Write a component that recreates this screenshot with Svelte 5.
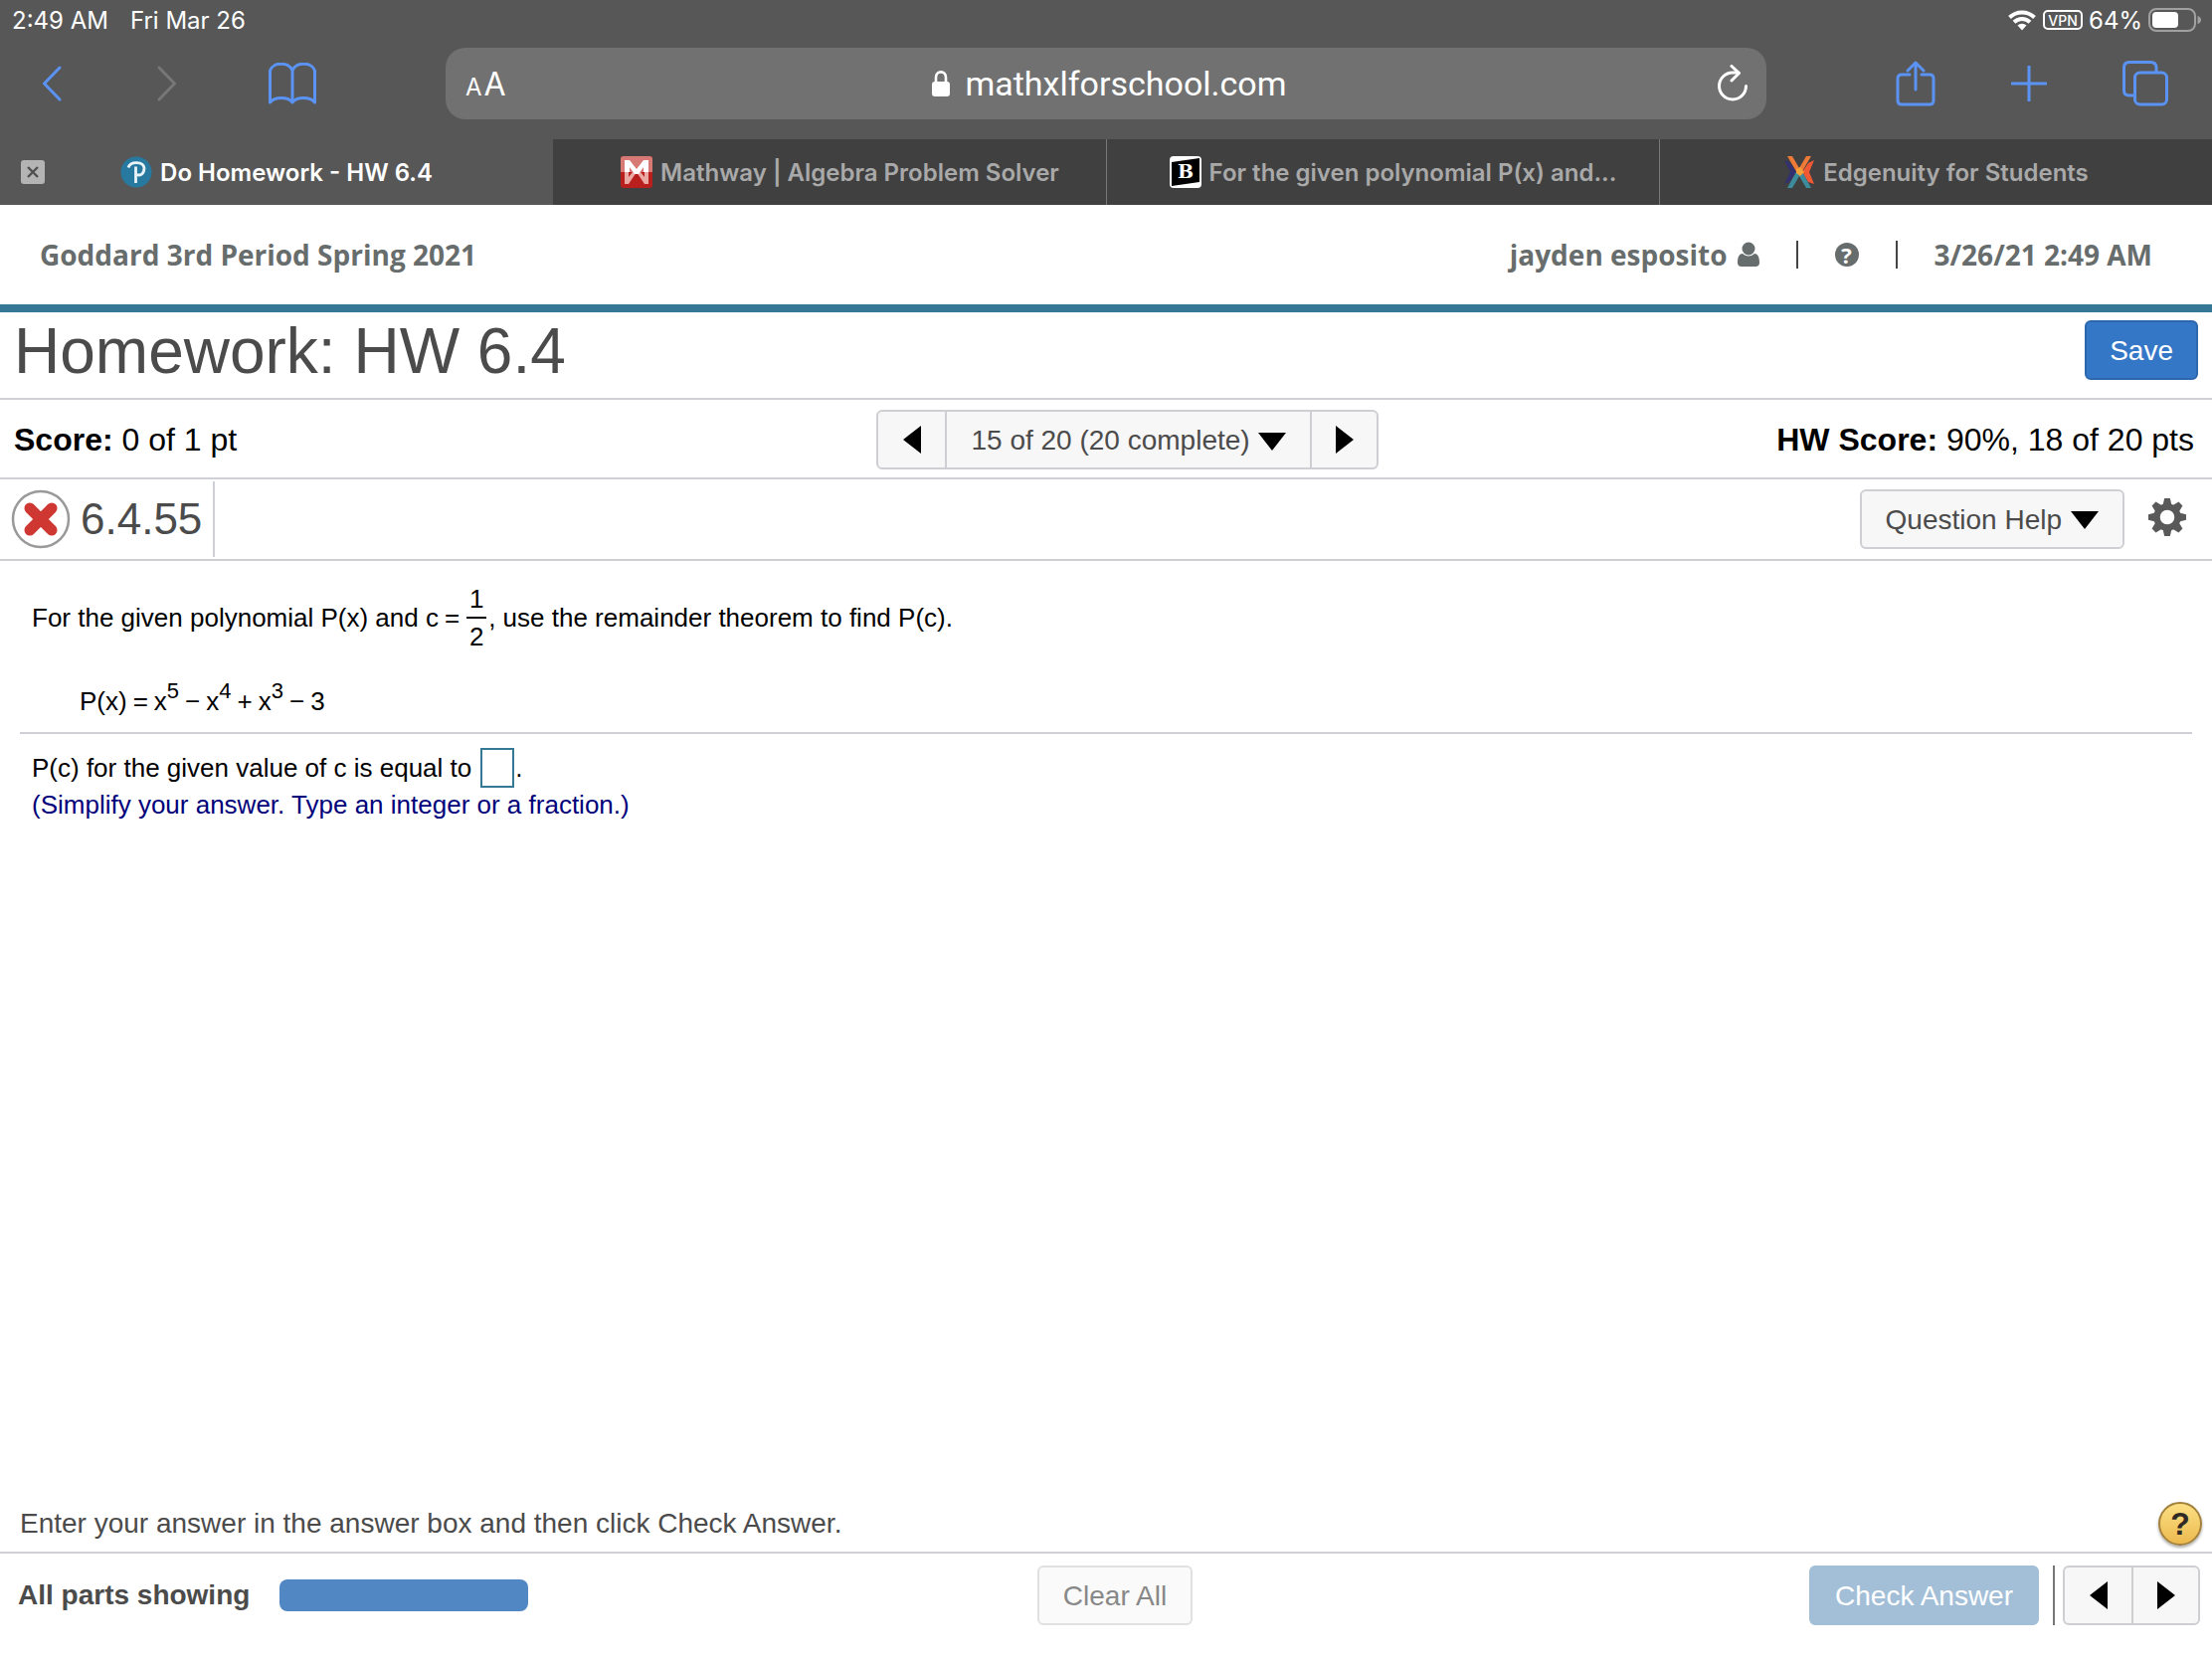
<script>
  let question = $state('15');
  let answer = $state('');
  const teeth = [0, 45, 90, 135, 180, 225, 270, 315];
  const terms = [
    { op: '=', power: '5' },
    { op: '−', power: '4' },
    { op: '+', power: '3' }
  ];
</script>

<div class="screen">
  <header class="browser">
    <div class="status">
      <span>2:49 AM</span>
      <span class="date">Fri Mar 26</span>
      <div class="indicators">
        <svg width="30" height="22" viewBox="0 0 30 22" aria-label="Wi-Fi">
          <g fill="none" stroke="#fff" stroke-width="4">
            <path d="M2.5 8.5 A18 18 0 0 1 27.500 8.5" />
            <path d="M7 13.300 A11.500 11.500 0 0 1 23 13.300" />
          </g>
          <path d="M10.500 16.500 A6.500 6.500 0 0 1 19.500 16.500 L15 21.500 Z" fill="#fff" />
        </svg>
        <span class="vpn">VPN</span>
        <span class="percent">64%</span>
        <svg width="54" height="26" viewBox="0 0 54 26" aria-label="Battery">
          <rect x="1" y="2" width="46" height="22" rx="7" fill="none" stroke="#a0a0a0" stroke-width="2" />
          <rect x="4" y="5" width="26" height="16" rx="4" fill="#fff" />
          <path d="M49.500 9 Q53 10 53 13 Q53 16 49.500 17 Z" fill="#a0a0a0" />
        </svg>
      </div>
    </div>

    <div class="toolbar">
      <div class="tools left">
        <button aria-label="Back">
          <svg width="20" height="36" viewBox="0 0 20 36"><path d="M18 2 L2.500 18 L18 34" /></svg>
        </button>
        <button class="dim" aria-label="Forward">
          <svg width="20" height="36" viewBox="0 0 20 36"><path d="M2 2 L17.500 18 L2 34" /></svg>
        </button>
        <button aria-label="Bookmarks">
          <svg width="48" height="42" viewBox="0 0 48 42">
            <path d="M24 40 C20 34 6 34 1.500 40 V8 C4 -1 21 -1 24 8 C27 -1 44 -1 46.500 8 V40 C42 34 28 34 24 40 V8" />
          </svg>
        </button>
      </div>
      <div class="address">
        <button class="reader" aria-label="Text size"><small>A</small><span>A</span></button>
        <button class="location">
          <svg width="20" height="28" viewBox="0 0 20 28">
            <rect x="1" y="12" width="18" height="15" rx="3" fill="#fff" />
            <path d="M5 13 V8 C5 0.500 15 0.500 15 8 V13" fill="none" stroke="#fff" stroke-width="2.600" />
          </svg>
          mathxlforschool.com
        </button>
        <button class="reload" aria-label="Reload">
          <svg width="32" height="38" viewBox="0 0 32 38">
            <path d="M29.500 21.500 A13.500 13.500 0 1 1 16 8 L22 8" />
            <path d="M15 1.500 L22.500 8.500 L15 16" />
          </svg>
        </button>
      </div>
      <div class="tools right">
        <button aria-label="Share">
          <svg width="40" height="46" viewBox="0 0 40 46">
            <path d="M14 14 H6 Q2 14 2 18 V40 Q2 44 6 44 H34 Q38 44 38 40 V18 Q38 14 34 14 H26" />
            <path d="M20 29 V2.500 M12 10 L20 2 L28 10" />
          </svg>
        </button>
        <button aria-label="New tab">
          <svg width="36" height="36" viewBox="0 0 36 36"><path d="M18 1 V35 M1 18 H35" /></svg>
        </button>
        <button aria-label="All tabs">
          <svg width="46" height="46" viewBox="0 0 46 46">
            <rect x="12.500" y="12" width="32" height="32" rx="5" />
            <path d="M12 35 H7 Q1.500 35 1.500 30 V7 Q1.500 1.500 7 1.500 H28 Q34 1.500 34 7 V11" />
          </svg>
        </button>
      </div>
    </div>

    <nav class="tabs">
      <div class="tab active">
        <button class="close" aria-label="Close tab">
          <svg width="14" height="14" viewBox="0 0 14 14"><path d="M2 2 L12 12 M12 2 L2 12" stroke="#505050" stroke-width="2.400" /></svg>
        </button>
        <a href="#homework">
          <svg width="32" height="32" viewBox="0 0 32 32">
            <circle cx="16" cy="16" r="15.500" fill="#28799f" />
            <path d="M8 11.500 C10 5 23 5 24 12 C24 18 20 20 15.500 18.500" fill="none" stroke="#e8f4f8" stroke-width="2.800" />
            <path d="M15.500 10.500 V27" stroke="#e8f4f8" stroke-width="2.800" />
          </svg>
          Do Homework - HW 6.4
        </a>
      </div>
      <div class="tab inset">
        <a href="#mathway">
          <svg width="32" height="32" viewBox="0 0 32 32">
            <rect width="32" height="32" rx="3" fill="#b9201d" />
            <path d="M0 16 V3 Q0 0 3 0 H29 Q32 0 32 3 V16 Z" fill="#d87975" />
            <path d="M4 16 V28 H8 L16 16 L24 28 H28 V16 H24 V21 L20 16 H12 L8 21 V16 Z" fill="#eba9a6" />
            <path d="M4 16 V4 H9 L16 13 L23 4 H28 V16 H23 V11 L18 18 H14 L9 11 V16 Z" fill="#fff" />
          </svg>
          Mathway | Algebra Problem Solver
        </a>
      </div>
      <div class="tab inset">
        <a href="#brainly">
          <svg width="32" height="32" viewBox="0 0 32 32">
            <rect width="32" height="32" rx="4" fill="#fff" />
            <path d="M2 6 L30 2 V26 L2 30 Z" fill="#000" />
            <text x="16" y="22" text-anchor="middle" class="mark">B</text>
          </svg>
          For the given polynomial P(x) and...
        </a>
      </div>
      <div class="tab">
        <a href="#edgenuity">
          <svg width="32" height="32" viewBox="0 0 32 32">
            <path d="M1 4 L6 6 L13 16 L6 26 L1 28 L7 16 Z" fill="#33306f" />
            <path d="M31 4 L25 7 L19 16 L25 26 L31 28 L26 16 Z" fill="#ef5a35" />
            <path d="M4 0 L9 0 L16 12 L23 0 L28 0 L18 17 L14 17 Z" fill="#ee7a38" />
            <path d="M14 14 H18 L28 32 H23 L16 20 L9 32 H4 Z" fill="#3d8c9d" />
            <path d="M13 13 L17 11 L21 16 L17 20 L13 17 Z" fill="#f3a23a" />
          </svg>
          Edgenuity for Students
        </a>
      </div>
    </nav>
  </header>

  <div class="course">
    <span>Goddard 3rd Period Spring 2021</span>
    <div class="account">
      <a class="user" href="#account">
        jayden esposito
        <svg width="22" height="26" viewBox="0 0 22 26">
          <circle cx="11" cy="7" r="6.500" fill="#676c6c" />
          <path d="M0 21 C0 15 2 12 5 12 Q11 17 17 12 C20 12 22 15 22 21 Q22 25 18 25 H4 Q0 25 0 21 Z" fill="#676c6c" />
        </svg>
      </a>
      <i></i>
      <a class="help" href="#help" aria-label="Help">?</a>
      <i></i>
      <time>3/26/21 2:49 AM</time>
    </div>
  </div>

  <div class="title">
    <h1>Homework: HW 6.4</h1>
    <button class="btn save">Save</button>
  </div>

  <div class="scores">
    <span><b>Score:</b> 0 of 1 pt</span>
    <div class="group">
      <button aria-label="Previous question">
        <svg width="18" height="28" viewBox="0 0 18 28"><path d="M18 0 V28 L0 14 Z" /></svg>
      </button>
      <div class="picker">
        <select bind:value={question} aria-label="Question">
          <option value="15">15 of 20 (20 complete)</option>
        </select>
        <svg width="28" height="18" viewBox="0 0 28 18"><path d="M0 0 H28 L14 18 Z" /></svg>
      </div>
      <button aria-label="Next question">
        <svg width="18" height="28" viewBox="0 0 18 28"><path d="M0 0 V28 L18 14 Z" /></svg>
      </button>
    </div>
    <span class="end"><b>HW Score:</b> 90%, 18 of 20 pts</span>
  </div>

  <div class="exercise">
    <div class="number">
      <svg width="60" height="60" viewBox="0 0 60 60" aria-label="Incorrect">
        <circle cx="30" cy="30" r="28" fill="#fff" stroke="#999" stroke-width="2.500" />
        <path d="M19 19 L41 41 M41 19 L19 41" stroke="#cf3732" stroke-width="11" stroke-linecap="round" />
      </svg>
      6.4.55
    </div>
    <button class="btn">
      Question Help
      <svg width="28" height="18" viewBox="0 0 28 18"><path d="M0 0 H28 L14 18 Z" /></svg>
    </button>
    <button class="gear" aria-label="Settings">
      <svg width="38" height="38" viewBox="-19 -19 38 38">
        <circle r="10.500" fill="none" stroke="#595959" stroke-width="6.500" />
        {#each teeth as angle}
          <path d="M-4.500 -12 L-2.800 -19 H2.800 L4.500 -12 Z" fill="#595959" transform="rotate({angle})" />
        {/each}
      </svg>
    </button>
  </div>

  <main>
    <div class="problem">
      <p class="sentence">
        <span>For the given polynomial P(x) and c</span>
        <span class="equals">=</span>
        <span class="fraction"><span>1</span><span>2</span></span>
        <span>, use the remainder theorem to find P(c).</span>
      </p>
      <p class="formula">
        P(x){#each terms as term}<span class="op">{term.op}</span>x<sup>{term.power}</sup>{/each}<span class="op">−</span>3
      </p>
    </div>
    <div class="response">
      <label class="sentence">
        <span>P(c) for the given value of c is equal to</span>
        <input bind:value={answer} type="text" />
        <span>.</span>
      </label>
      <p class="note">(Simplify your answer. Type an integer or a fraction.)</p>
    </div>
  </main>

  <div class="hint">
    <span>Enter your answer in the answer box and then click Check Answer.</span>
    <button class="assist" aria-label="Get help">?</button>
  </div>

  <footer>
    <div class="parts"><b>All parts showing</b><div class="bar"></div></div>
    <button class="btn clear">Clear All</button>
    <div class="actions">
      <button class="btn check">Check Answer</button>
      <i></i>
      <div class="group">
        <button aria-label="Previous">
          <svg width="18" height="28" viewBox="0 0 18 28"><path d="M18 0 V28 L0 14 Z" /></svg>
        </button>
        <button aria-label="Next">
          <svg width="18" height="28" viewBox="0 0 18 28"><path d="M0 0 V28 L18 14 Z" /></svg>
        </button>
      </div>
    </div>
  </footer>
</div>

<style>
  * { box-sizing: border-box; }
  button, select, input { font: inherit; color: inherit; margin: 0; padding: 0; border: 0; background: none; border-radius: 0; }
  a { color: inherit; text-decoration: none; }
  p, h1 { margin: 0; font-weight: 400; }
  svg { display: block; flex: none; }
  .screen {
    display: flex; flex-direction: column; min-height: 100vh; background: #fff; color: #4b4b4b;
    font-family: "Liberation Sans", Arial, sans-serif; font-size: 28px;
  }

  .browser { background: #575757; color: #fff; font-family: Inter, sans-serif; font-size: 24px; }
  .status { display: flex; align-items: center; height: 40px; padding: 0 10px 0 12px; }
  .date { margin-left: 22px; }
  .indicators { display: flex; align-items: center; gap: 6px; margin-left: auto; }
  .vpn {
    display: flex; align-items: center; justify-content: center; width: 40px; height: 20px;
    border: 2px solid #fff; border-radius: 5px; font-size: 14px; font-weight: 500;
  }
  .toolbar { display: grid; grid-template-columns: 28fr 83fr 28fr; align-items: center; height: 100px; padding-bottom: 12px; }
  .tools { display: flex; align-items: center; }
  .tools svg { fill: none; stroke: #5b93f4; stroke-width: 3; stroke-linecap: round; stroke-linejoin: round; }
  .tools .dim { padding-left: 4px; }
  .tools .dim svg { stroke: #777; }
  .left { padding-left: 42px; gap: 92px; }
  .right { padding-right: 44px; gap: 76px; justify-content: flex-end; }
  .address {
    display: grid; grid-template-columns: 1fr auto 1fr; align-items: center; height: 72px;
    padding: 0 18px 0 20px; border-radius: 20px; background: #717171;
  }
  .reader { display: flex; align-items: baseline; font-size: 32px; gap: 2px; }
  .reader small { font-size: 24px; }
  .location { display: flex; align-items: center; gap: 14px; padding-left: 4px; font: 34px Roboto, sans-serif; }
  .reload { justify-self: end; }
  .reload svg { fill: none; stroke: #fff; stroke-width: 3; stroke-linecap: round; stroke-linejoin: round; }
  .tabs { display: grid; grid-template-columns: repeat(4, 1fr); height: 66px; font-weight: 600; }
  .tab {
    position: relative; display: flex; align-items: center; justify-content: center;
    background: #404040; color: #a9a9a9; border-left: 1px solid #777;
  }
  .tab a { display: flex; align-items: center; gap: 8px; white-space: nowrap; }
  .tab.active { background: none; color: #fff; border: 0; }
  .tab.active + .tab { border-color: #404040; }
  .tab.inset { padding-left: 20px; }
  .close {
    position: absolute; left: 21px; display: grid; place-items: center; width: 24px; height: 24px;
    border-radius: 3px; background: #b4b4b4;
  }
  .mark { font: bold 19px "DejaVu Serif", serif; fill: #fff; }

  .course {
    display: flex; justify-content: space-between; align-items: center; height: 108px; padding: 0 60px 0 40px;
    border-bottom: 8px solid #357896; color: #676c6c; font: 700 28px "Open Sans", sans-serif;
  }
  .account { display: flex; align-items: center; gap: 37px; }
  .user { display: flex; align-items: center; gap: 10px; }
  .account i { width: 2px; height: 28px; background: #444; }
  .help {
    display: grid; place-items: center; width: 24px; height: 24px; border-radius: 50%;
    background: #676c6c; color: #fff; font-size: 22px; line-height: 24px;
  }

  .title { display: flex; justify-content: space-between; align-items: center; height: 88px; padding: 0 14px; border-bottom: 2px solid #cfcfd6; }
  h1 { font-size: 64px; line-height: 76px; padding-bottom: 8px; }
  .btn {
    display: flex; align-items: center; justify-content: center; gap: 9px; height: 60px; padding: 2px 24px 0;
    border: 2px solid #cfcfd3; border-radius: 6px; background: #f7f7f7; white-space: nowrap;
  }
  .title .save { margin-bottom: 10px; padding: 2px 23px 0; border-color: #2d68ae; background: #3577c7; color: #fff; }

  .scores {
    display: grid; grid-template-columns: 217fr auto 205fr; align-items: center; height: 80px; padding: 2px 18px 0 14px;
    border-bottom: 2px solid #cfcfd6; color: #000; font-size: 32px;
  }
  .end { text-align: right; }
  .group { display: flex; height: 60px; border: 2px solid #cfcfd3; border-radius: 6px; background: #f7f7f7; color: #4b4b4b; font-size: 28px; }
  .group button { display: grid; place-items: center; width: 67px; }
  .group svg { fill: #000; }
  .group > * + * { border-left: 2px solid #cfcfd3; }
  .picker { position: relative; display: flex; }
  .picker select { appearance: none; padding: 0 60px 0 24px; }
  .picker svg { position: absolute; right: 24px; top: 21px; pointer-events: none; }

  .exercise { display: flex; align-items: center; height: 82px; padding: 0 26px 0 11px; border-bottom: 2px solid #cfcfd3; }
  .number {
    display: flex; align-items: center; gap: 10px; height: 76px; margin-right: auto; padding-right: 11px;
    border-right: 2px solid #cfcfd6; font-size: 44px;
  }
  .gear { margin-left: 24px; padding-bottom: 4px; }

  main { flex: 1; padding: 0 20px; color: #000; font-size: 26px; line-height: 30px; }
  .problem { padding: 20px 12px 16px; border-bottom: 2px solid #cfcfd6; }
  .sentence { display: flex; align-items: center; }
  .equals { margin: 0 7px 0 6px; }
  .fraction { display: flex; flex-direction: column; align-items: center; width: 20px; margin-right: 2px; line-height: 28px; }
  .fraction span { padding: 4px 0; }
  .fraction span + span { width: 100%; border-top: 2px solid #000; padding: 0; line-height: 36px; text-align: center; }
  .formula { padding: 32px 0 0 48px; }
  .formula sup { font-size: 22px; line-height: 0; vertical-align: 12px; }
  .op { margin: 0 6px; }
  .response { padding: 14px 12px; }
  input { width: 34px; height: 40px; margin: 0 1px 0 9px; border: 2px solid #357896; background: #fff; text-align: center; }
  .note { padding-top: 2px; color: #00007a; }

  .hint { display: flex; justify-content: space-between; align-items: center; padding: 0 10px 6px 20px; border-bottom: 2px solid #cfcfd6; }
  .assist {
    width: 44px; height: 44px; border: 2px solid #a3803c; border-radius: 50%; color: #302a24;
    background: linear-gradient(#fbdf83, #edba50); box-shadow: 0 2px 3px #aaa; font-size: 32px; font-weight: 700; line-height: 40px;
  }
  footer { display: grid; grid-template-columns: 1025fr auto 1013fr; align-items: center; height: 106px; padding: 0 12px 22px 18px; }
  .parts { display: flex; align-items: center; gap: 30px; }
  .bar { width: 250px; height: 32px; border-radius: 8px; background: #5187c3; }
  .clear { border-color: #e0e0e0; background: #fafafa; color: #888; }
  .actions { display: flex; justify-content: flex-end; align-items: center; }
  .check { border-color: #a3bfd8; background: #a3bfd8; color: #fff; }
  .actions i { width: 2px; height: 60px; margin: 0 8px 0 14px; background: #777; }
</style>
